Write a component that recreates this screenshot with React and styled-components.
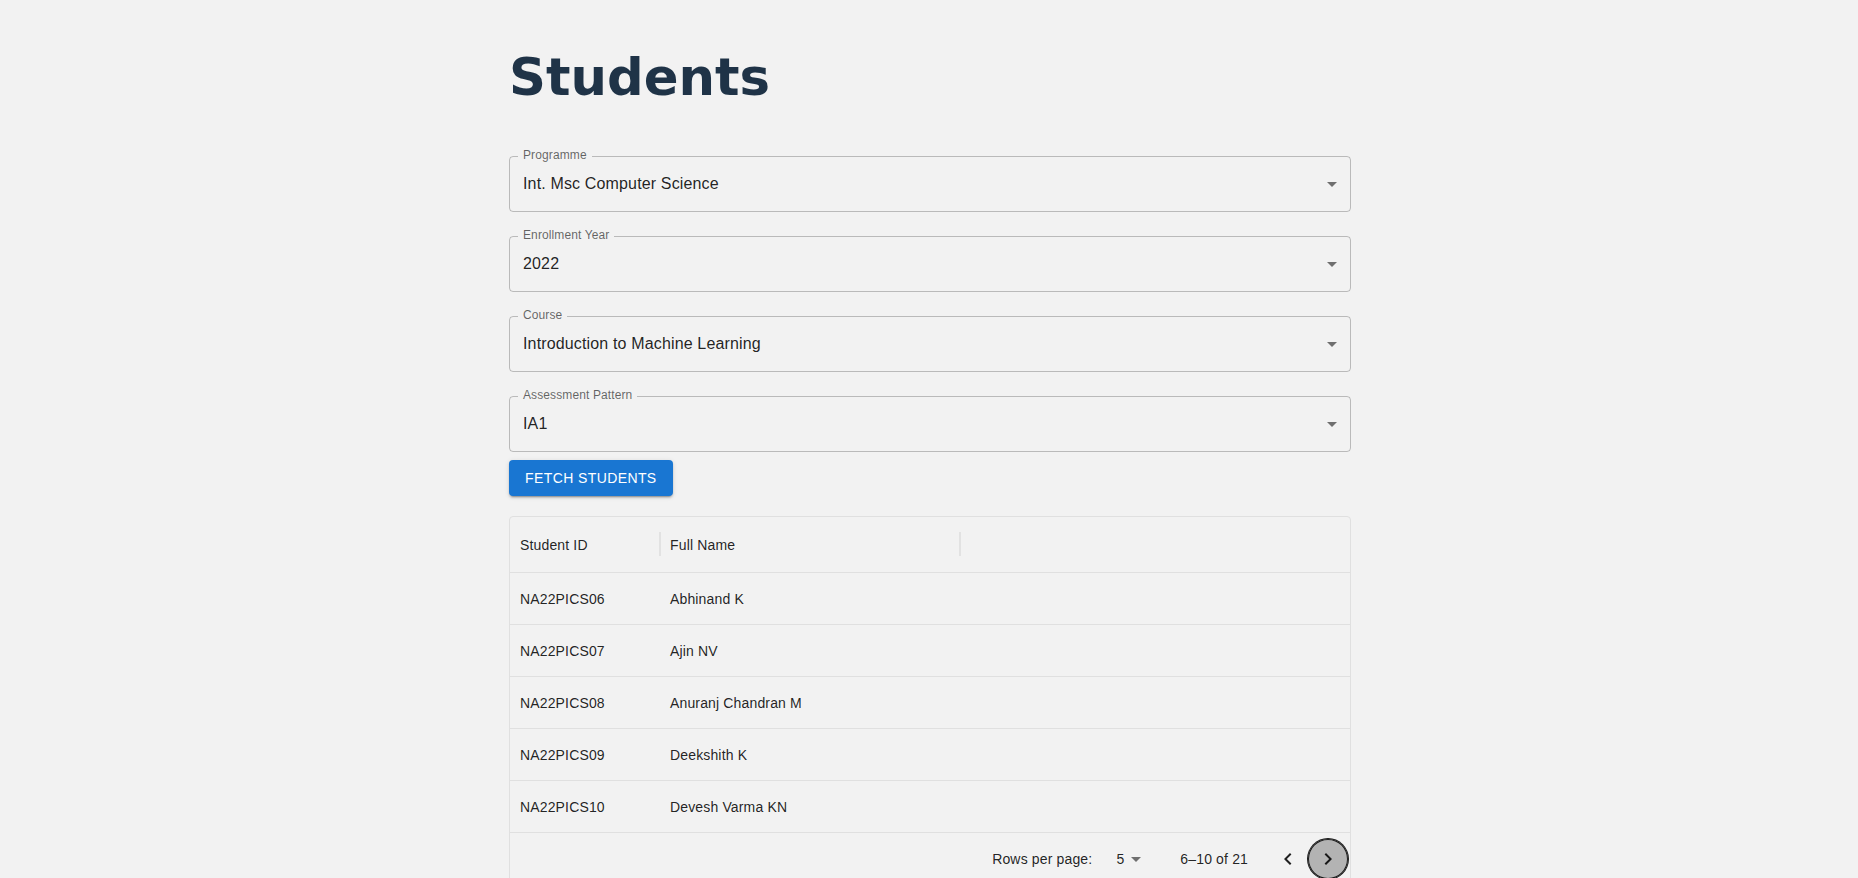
import React from "react";
import styled, { createGlobalStyle } from "styled-components";

const GlobalStyle = createGlobalStyle`
  html, body { margin: 0; padding: 0; }
  body {
    background: #f2f2f2;
    font-family: "Liberation Sans", Arial, Helvetica, sans-serif;
    color: rgba(0, 0, 0, 0.87);
  }
  * { box-sizing: border-box; }
`;

const Page = styled.main`
  padding: 47px 0 0 2px;
`;

const Container = styled.div`
  width: 842px;
  margin: 0 auto;
  display: flex;
  flex-direction: column;
`;

const Title = styled.h1`
  margin: 0 0 33px;
  font-family: "DejaVu Sans", sans-serif;
  font-weight: 700;
  font-size: 51.3px;
  line-height: 60px;
  color: #1f3347;
`;

const FieldBox = styled.div`
  position: relative;
  margin: 16px 0 8px;
  height: 56px;
  border: 1px solid rgba(0, 0, 0, 0.23);
  border-radius: 4px;
  display: flex;
  align-items: center;
  padding: 0 6px 0 13px;
`;

const FieldLabel = styled.label`
  position: absolute;
  top: -10px;
  left: 8px;
  padding: 0 5px;
  background: #f2f2f2;
  font-size: 12px;
  line-height: 17px;
  letter-spacing: 0.11px;
  color: rgba(0, 0, 0, 0.6);
`;

const FieldValue = styled.div`
  flex: 1;
  font-size: 16px;
  line-height: 23px;
  letter-spacing: 0.15px;
  padding-bottom: 2px;
  color: rgba(0, 0, 0, 0.87);
`;

const DropIcon = styled.svg`
  width: 24px;
  height: 24px;
  fill: rgba(0, 0, 0, 0.54);
  flex: none;
`;

const PrimaryButton = styled.button`
  align-self: flex-start;
  height: 36px;
  padding: 6px 16px;
  border: 0;
  border-radius: 4px;
  background: #1976d2;
  color: #fff;
  font-family: "Liberation Sans", Arial, sans-serif;
  font-weight: 400;
  font-size: 14px;
  line-height: 24px;
  letter-spacing: 0.02857em;
  text-transform: uppercase;
  box-shadow: 0px 3px 1px -2px rgba(0, 0, 0, 0.2),
    0px 2px 2px 0px rgba(0, 0, 0, 0.14), 0px 1px 5px 0px rgba(0, 0, 0, 0.12);
  cursor: pointer;
`;

const Grid = styled.div`
  margin-top: 20px;
  border: 1px solid #e0e0e0;
  border-radius: 4px;
  font-size: 14px;
  letter-spacing: 0.15px;
`;

const HeaderRow = styled.div`
  display: flex;
  height: 56px;
  border-bottom: 1px solid #e0e0e0;
`;

const HeaderCell = styled.div`
  position: relative;
  width: ${(p) => p.$w}px;
  padding: 0 10px;
  display: flex;
  align-items: center;
  font-weight: 400;
  &::after {
    content: "";
    position: absolute;
    right: -1px;
    top: 15px;
    width: 2px;
    height: 24px;
    background: #e2e2e2;
  }
`;

const Row = styled.div`
  display: flex;
  height: 52px;
  border-bottom: 1px solid #e0e0e0;
`;

const Cell = styled.div`
  width: ${(p) => p.$w}px;
  padding: 0 10px;
  display: flex;
  align-items: center;
`;

const Footer = styled.div`
  display: flex;
  justify-content: flex-end;
  align-items: center;
  min-height: 52px;
  padding-right: 2px;
  font-size: 14px;
  line-height: 20px;
`;

const PageSelect = styled.div`
  display: flex;
  align-items: center;
  margin: 0 32px 0 8px;
  padding-left: 8px;
`;

const SelectValue = styled.span`
  min-width: 16px;
  text-align: right;
`;

const Actions = styled.div`
  display: flex;
  margin-left: 20px;
`;

const IconButton = styled.button`
  width: 40px;
  height: 40px;
  padding: 8px;
  border: 0;
  border-radius: 50%;
  display: flex;
  align-items: center;
  justify-content: center;
  background: ${(p) => (p.$focused ? "#b3b3b3" : "transparent")};
  box-shadow: ${(p) =>
    p.$focused ? "0 0 0 1px #1c1c1c, inset 0 0 0 1px #1c1c1c" : "none"};
  cursor: pointer;
  svg {
    width: 24px;
    height: 24px;
    fill: rgba(0, 0, 0, 0.87);
  }
`;

const ArrowDrop = () => (
  <DropIcon viewBox="0 0 24 24">
    <path d="M7 10l5 5 5-5z" />
  </DropIcon>
);

const fields = [
  ["Programme", "Int. Msc Computer Science"],
  ["Enrollment Year", "2022"],
  ["Course", "Introduction to Machine Learning"],
  ["Assessment Pattern", "IA1"],
];

const rows = [
  ["NA22PICS06", "Abhinand K"],
  ["NA22PICS07", "Ajin NV"],
  ["NA22PICS08", "Anuranj Chandran M"],
  ["NA22PICS09", "Deekshith K"],
  ["NA22PICS10", "Devesh Varma KN"],
];

export default function App() {
  return (
    <>
      <GlobalStyle />
      <Page>
        <Container>
          <Title>Students</Title>
          {fields.map(([label, value]) => (
            <FieldBox key={label}>
              <FieldLabel>{label}</FieldLabel>
              <FieldValue>{value}</FieldValue>
              <ArrowDrop />
            </FieldBox>
          ))}
          <PrimaryButton>Fetch Students</PrimaryButton>
          <Grid>
            <HeaderRow>
              <HeaderCell $w={150}>Student ID</HeaderCell>
              <HeaderCell $w={300}>Full Name</HeaderCell>
            </HeaderRow>
            {rows.map(([id, name]) => (
              <Row key={id}>
                <Cell $w={150}>{id}</Cell>
                <Cell $w={300}>{name}</Cell>
              </Row>
            ))}
            <Footer>
              <span>Rows per page:</span>
              <PageSelect>
                <SelectValue>5</SelectValue>
                <ArrowDrop />
              </PageSelect>
              <span>6–10 of 21</span>
              <Actions>
                <IconButton aria-label="previous page">
                  <svg viewBox="0 0 24 24">
                    <path d="M15.41 16.59 10.83 12l4.58-4.59L14 6l-6 6 6 6z" />
                  </svg>
                </IconButton>
                <IconButton $focused aria-label="next page">
                  <svg viewBox="0 0 24 24">
                    <path d="M8.59 16.59 13.17 12 8.59 7.41 10 6l6 6-6 6z" />
                  </svg>
                </IconButton>
              </Actions>
            </Footer>
          </Grid>
        </Container>
      </Page>
    </>
  );
}
